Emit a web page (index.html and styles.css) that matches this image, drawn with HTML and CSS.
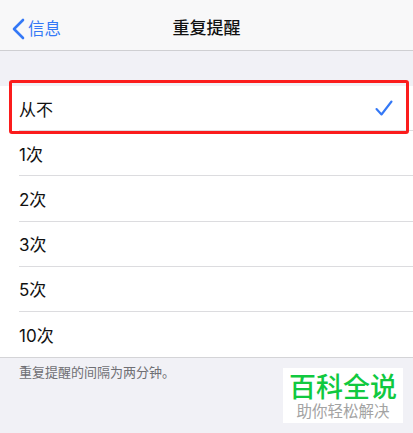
FILE: index.html
```html
<!DOCTYPE html>
<html lang="zh">
<head>
<meta charset="utf-8">
<title>重复提醒</title>
<link rel="stylesheet" href="styles.css">
</head>
<body>
<div class="screen">
  <header class="nav">
    <div class="back">
      <svg class="chev" width="14" height="22" viewBox="0 0 14 22"><path d="M12 2 L3 11 L12 20" fill="none" stroke="#3478f6" stroke-width="2.6" stroke-linecap="round" stroke-linejoin="round"/></svg>
      <span>信息</span>
    </div>
    <h1 class="title">重复提醒</h1>
  </header>
  <ul class="list">
    <li class="row"><span class="label">从不</span>
      <svg class="check" width="18" height="16" viewBox="0 0 18 16"><path d="M1.5 9 L6.5 14.5 L16.5 1.5" fill="none" stroke="#3478f6" stroke-width="2.1" stroke-linecap="round" stroke-linejoin="round"/></svg>
    </li>
    <li class="row"><span class="label">1次</span></li>
    <li class="row"><span class="label">2次</span></li>
    <li class="row"><span class="label">3次</span></li>
    <li class="row"><span class="label">5次</span></li>
    <li class="row"><span class="label">10次</span></li>
  </ul>
  <p class="note">重复提醒的间隔为两分钟。</p>
  <div class="highlight"></div>
  <div class="mark">
    <div class="mark-main">百科全说</div>
    <div class="mark-sub">助你轻松解决</div>
  </div>
</div>
</body>
</html>
```
FILE: styles.css
```css
* { box-sizing: border-box; }
html, body { margin: 0; padding: 0; }
body { font-family: Inter, "Noto Sans CJK SC", sans-serif; }
.screen {
  position: relative;
  width: 413px;
  height: 433px;
  overflow: hidden;
  background: #f1f1f6;
}
.nav {
  position: relative;
  height: 51px;
  background: #f8f8f9;
  border-bottom: 1px solid #cfcfd2;
  display: flex;
  align-items: center;
  justify-content: center;
}
.back {
  position: absolute;
  left: 11px;
  top: 17px;
  display: flex;
  align-items: center;
  gap: 3px;
  color: #3478f6;
  font-size: 16.5px;
  line-height: 24px;
}
.title {
  margin: 6px 0 0;
  font-size: 17px;
  line-height: 24px;
  font-weight: 500;
  color: #111;
}
.list {
  list-style: none;
  margin: 35px 0 0;
  padding: 0 0 0 19px;
  background: #fff;
  border-bottom: 1px solid #d4d4d7;
}
.row {
  height: 45.2px;
  display: flex;
  align-items: center;
  justify-content: space-between;
  padding-right: 20px;
  border-bottom: 1px solid #dcdcdf;
  font-size: 17px;
  color: #111;
}
.row:last-child { border-bottom: 0; }
.note {
  margin: 5px 0 0 19px;
  font-size: 13px;
  line-height: 18px;
  color: #6f6f74;
}
.highlight {
  position: absolute;
  left: 9px;
  top: 80px;
  width: 400px;
  height: 54px;
  border: 3px solid #fb1c1c;
  border-radius: 3px;
}
.mark {
  position: absolute;
  left: 283px;
  top: 368px;
  width: 120px;
  height: 55px;
  background: #fff;
  text-align: center;
}
.mark-main {
  font-size: 27px;
  line-height: 30px;
  padding-top: 5px;
  font-weight: 500;
  color: #11c93f;
}
.mark-sub {
  font-size: 15.5px;
  line-height: 18px;
  color: #a3a3a3;
}
```
